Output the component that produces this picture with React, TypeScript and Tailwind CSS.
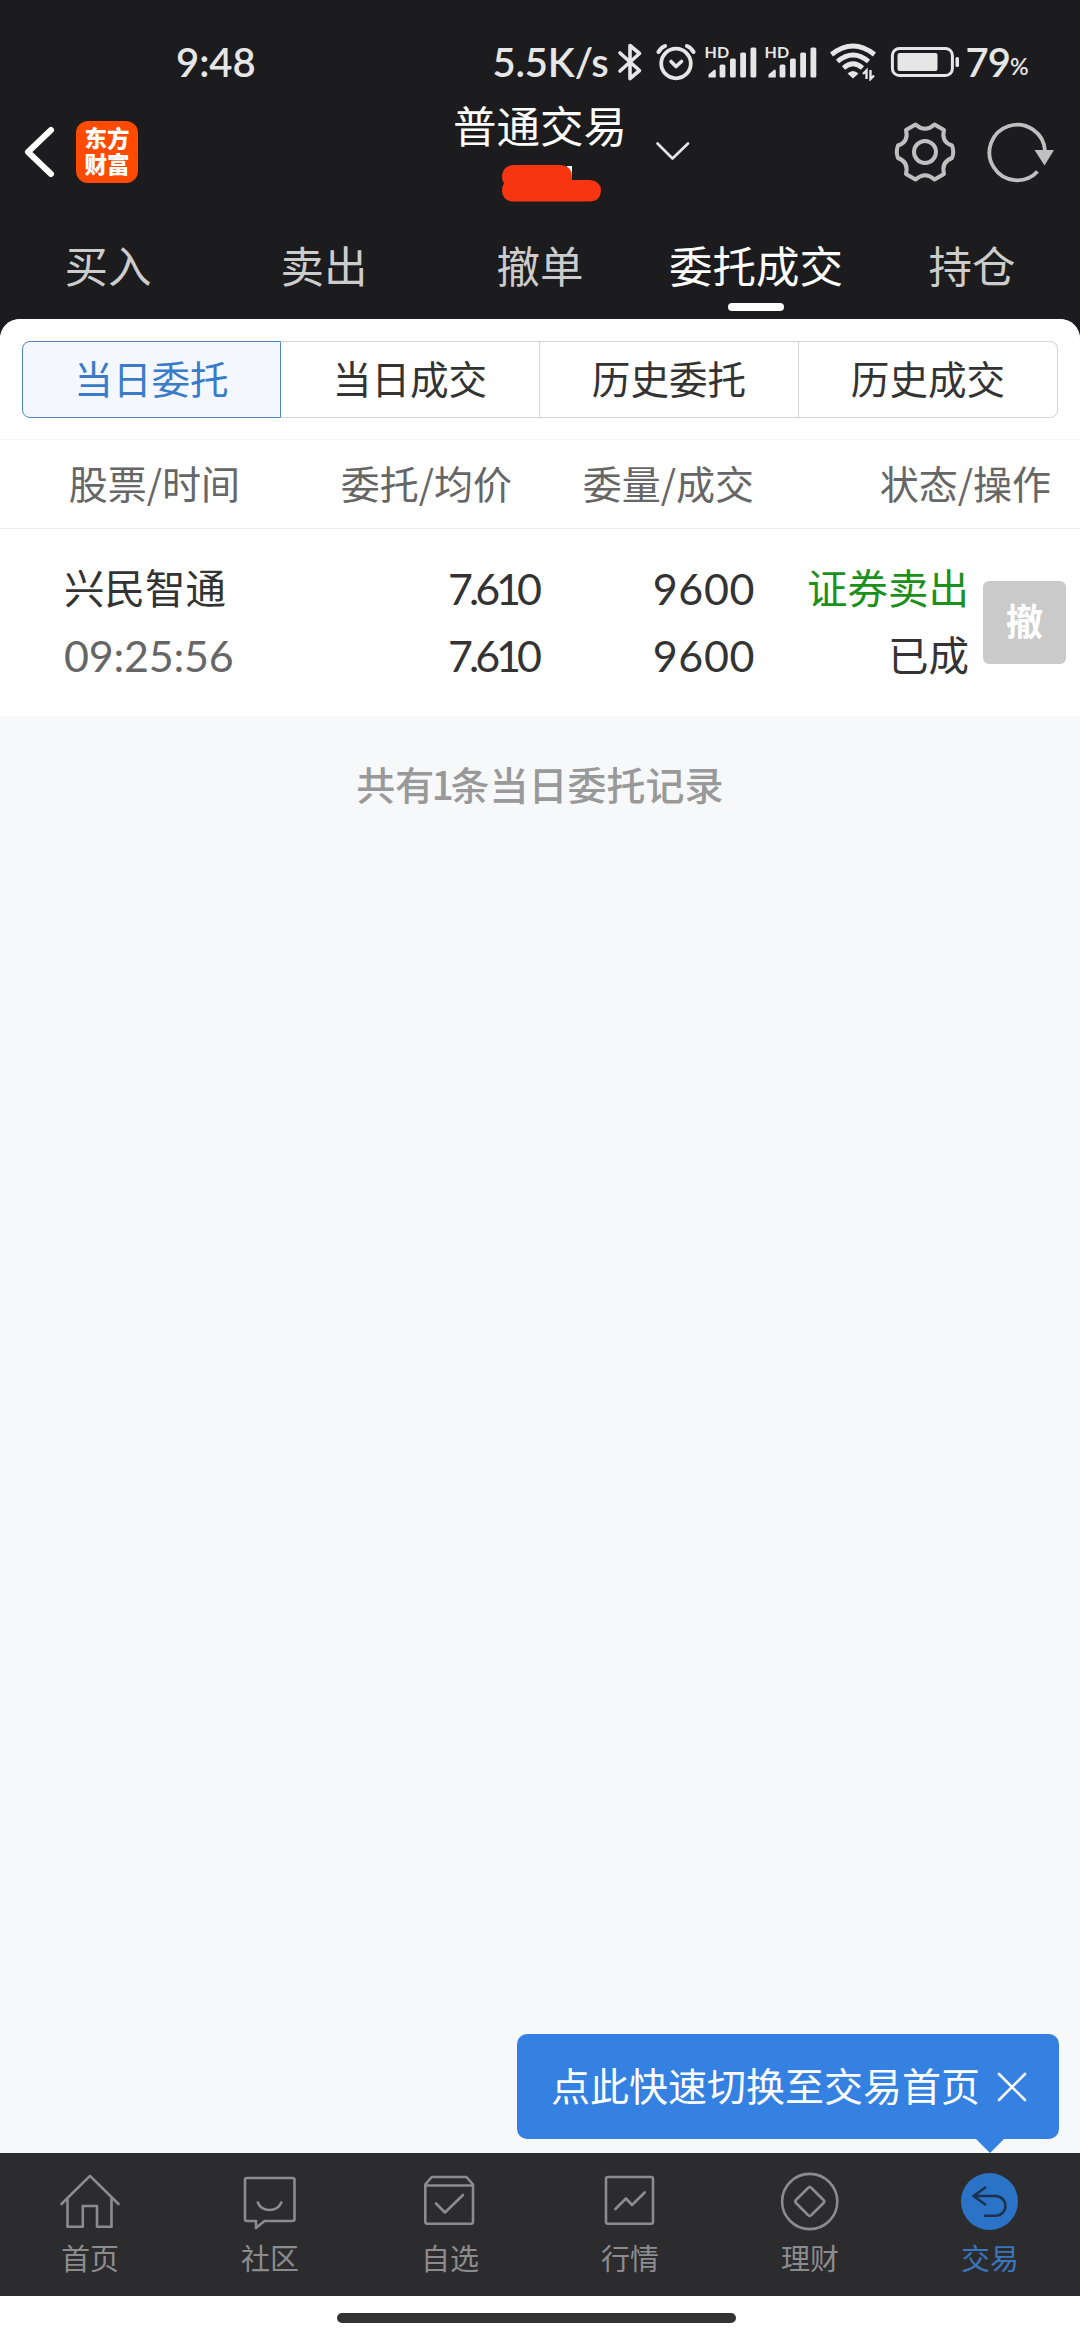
import React from "react";

const tabs = ["买入", "卖出", "撤单", "委托成交", "持仓"];
const segments = ["当日委托", "当日成交", "历史委托", "历史成交"];

function Bluetooth() {
  return (
    <svg width="26" height="40" viewBox="0 0 26 40" fill="none" stroke="#e6e6e6" strokeWidth="3.6" strokeLinejoin="round" strokeLinecap="round">
      <path d="M3 11 L22.5 28.5 L13 36.5 V3.5 L22.5 11.5 L3 29" />
    </svg>
  );
}

function Alarm() {
  return (
    <svg width="40" height="38" viewBox="0 0 40 38" fill="none" stroke="#e6e6e6" strokeLinecap="round" strokeLinejoin="round">
      <circle cx="20" cy="20.5" r="14.8" strokeWidth="3.8" />
      <path d="M2.5 9 Q5 4.5 9 3 M37.5 9 Q35 4.5 31 3" strokeWidth="4" />
      <path d="M15 18.5 L20 23.5 L25.5 18.5" strokeWidth="3.6" />
    </svg>
  );
}

function Signal() {
  return (
    <div className="relative w-[52px] h-[34px]">
      <svg width="52" height="34" viewBox="0 0 52 34" fill="#e6e6e6">
        <path d="M2.500 32.500 V29.500 L8.500 24.500 Q9.800 24.500 9.800 26 V32.500 Z" />
        <rect x="13.600" y="19.500" width="5.800" height="13" rx="1.500" />
        <rect x="24" y="13.500" width="5.800" height="19" rx="1.500" />
        <rect x="34.200" y="7.500" width="5.800" height="25" rx="1.500" />
        <rect x="44.500" y="2.500" width="5.800" height="30" rx="1.500" />
      </svg>
      <span className="absolute -left-px top-[-3px] text-[16px] leading-[20px] font-bold">HD</span>
    </div>
  );
}

function Wifi() {
  return (
    <svg width="48" height="38" viewBox="0 0 48 38" fill="none" stroke="#e6e6e6">
      <path d="M2.500 11.500 Q24 -5.500 45.500 11.500" strokeWidth="4.800" />
      <path d="M8.500 18.500 Q24 5.500 39.500 18.500" strokeWidth="4.800" />
      <path d="M14.500 25 Q24 16.500 33.500 25" strokeWidth="4.800" />
      <path d="M24 35.500 L18.500 30.500 Q24 25.500 29.500 30.500 Z" fill="#e6e6e6" stroke="none" />
      <path d="M37.500 36 V27.500 L34 31 M41.500 27 V36 L45 32.500" strokeWidth="2.400" />
    </svg>
  );
}

function Battery() {
  return (
    <svg width="70" height="32" viewBox="0 0 70 32" fill="none">
      <rect x="2.400" y="2.500" width="60" height="27" rx="7" stroke="#e6e6e6" strokeWidth="3" />
      <rect x="7.500" y="7" width="40" height="18" rx="2" fill="#e6e6e6" />
      <rect x="65.500" y="11" width="3.500" height="10" rx="1.500" fill="#e6e6e6" />
    </svg>
  );
}

function StatusBar() {
  return (
    <div className="h-[94px] flex items-center justify-between pt-[30px] font-[Lato] font-semibold text-[#e6e6e6]">
      <span className="ml-[176px] text-[40px] leading-[64px]">9:48</span>
      <div className="flex items-center mr-[51px]">
        <span className="w-[124px] text-[40px] leading-[64px] tracking-[-0.2px] whitespace-nowrap">5.5K/s</span>
        <Bluetooth />
        <div className="ml-[13px]"><Alarm /></div>
        <div className="ml-[10px]"><Signal /></div>
        <div className="ml-[8px]"><Signal /></div>
        <div className="ml-[11px]"><Wifi /></div>
        <div className="ml-[13px]"><Battery /></div>
        <span className="ml-[6px] text-[40px] leading-[64px] tracking-[-1px]">79</span>
        <span className="w-[19px] text-[23px] leading-[64px] pt-[8px]">%</span>
      </div>
    </div>
  );
}

function Header() {
  return (
    <header className="h-[126px] flex items-start justify-between">
      <div className="flex items-center w-[360px] pt-[27px] pl-[22px]">
        <svg width="36" height="62" viewBox="0 0 36 62" fill="none" stroke="#fff" strokeWidth="6" strokeLinecap="round" strokeLinejoin="round">
          <path d="M29 9 L6 31 L29 53" />
        </svg>
        <div className="ml-[18px] size-[62px] rounded-[12px] bg-[#ff4a00] text-white text-[22.500px] leading-[26px] font-black text-center pt-[3px]">
          东方
          <br />
          财富
        </div>
      </div>
      <div className="relative flex flex-col items-center w-[360px]">
        <h1 className="text-[43.500px] leading-[62px] text-white">普通交易</h1>
        <svg className="mt-[8px] ml-[22px]" width="100" height="40" viewBox="0 0 100 40">
          <path d="M66 2 H71 V16 H66 Z" fill="#fff" />
          <path d="M12 1 H60 Q71 2 71 13 V16 H89 Q100 17 100 27 Q99 37.500 89 37.500 H12 Q2 37 1 27 Q1 22 3 19.500 Q1 17 1 12 Q2 2 12 1 Z" fill="#f73511" />
        </svg>
        <svg className="absolute left-[294px] top-[45px]" width="38" height="24" viewBox="0 0 38 24" fill="none" stroke="#e8e8e8" strokeWidth="2.600" strokeLinecap="round" strokeLinejoin="round">
          <path d="M3.500 4.500 L18.500 19.500 L34 4.500" />
        </svg>
      </div>
      <div className="flex items-center justify-end w-[360px] pt-[25px] pr-[25px] gap-[28px]">
        <svg width="64" height="64" viewBox="0 0 64 64" fill="none" stroke="#bfbfbf" strokeWidth="4" strokeLinejoin="round">
          <circle cx="32" cy="32" r="11" />
          <path d="M22.500 4.500 Q32 13 41.500 4.500 L51 10 Q48 22 59 25.500 Q61.500 32 59 38 Q48 42 51 54 L41.500 59.500 Q32 51 22.500 59.500 L13 54 Q16 42 5 38 Q2.500 32 5 25.500 Q16 22 13 10 Z" />
        </svg>
        <svg width="70" height="66" viewBox="0 0 70 66" fill="none">
          <path d="M52.500 52.500 A27.800 27.800 0 1 1 60 32" stroke="#bfbfbf" strokeWidth="3.800" />
          <path d="M49.500 31 H69 L59.500 46.500 Z" fill="#bfbfbf" />
        </svg>
      </div>
    </header>
  );
}

function Tabs() {
  return (
    <nav className="grid grid-cols-5 h-[99px] pt-[13px]">
      {tabs.map((tab) => (
        <button key={tab} className={tab === "委托成交" ? "flex flex-col items-center text-white" : "flex flex-col items-center text-[#cccccc]"}>
          <span className="text-[43.500px] leading-[64px] whitespace-nowrap">{tab}</span>
          {tab === "委托成交" && <span className="mt-[6px] w-[56px] h-[8px] rounded-full bg-white" />}
        </button>
      ))}
    </nav>
  );
}

function Segments() {
  return (
    <div className="h-[120px] px-[22px] pt-[22px]">
      <div className="grid grid-cols-4 h-[77px] text-[38.600px] leading-[60px]">
        {segments.map((item, i) => (
          <button
            key={item}
            className={
              i === 0
                ? "pb-[5px] border border-[#4f86bd] bg-[#f4f8fe] text-[#3a7cc9] rounded-l-[8px]"
                : i === 3
                  ? "pb-[5px] border border-l-0 border-[#d3d4d6] text-[#333333] rounded-r-[8px]"
                  : "pb-[5px] border border-l-0 border-[#d3d4d6] text-[#333333]"
            }
          >
            {item}
          </button>
        ))}
      </div>
    </div>
  );
}

function OrderTable() {
  return (
    <section>
      <div className="flex h-[90px] border-y border-t-[#f5f5f6] border-b-[#ebebeb] text-[39px] leading-[84px] text-[#666666] whitespace-nowrap">
        <span className="w-[240px] text-right">股票/时间</span>
        <span className="w-[272px] text-right">委托/均价</span>
        <span className="w-[242px] text-right">委量/成交</span>
        <span className="w-[297px] text-right">状态/操作</span>
      </div>
      <div className="flex h-[187px] pt-[24px] text-[#333333] text-[40.500px] leading-[67px] whitespace-nowrap">
        <div className="w-[240px] pl-[64px]">
          <div>兴民智通</div>
          <div className="pt-[2px] font-[Lato] text-[43px] text-[#666666] tracking-[-0.2px]">09:25:56</div>
        </div>
        <div className="w-[298px] pt-[2px] text-right font-[Lato] text-[43px] tracking-[-4px]">
          <div>7.610</div>
          <div>7.610</div>
        </div>
        <div className="w-[217px] pt-[2px] text-right font-[Lato] text-[43px] tracking-[0.600px]">
          <div>9600</div>
          <div>9600</div>
        </div>
        <div className="w-[214px] text-right">
          <div className="text-[#1b911b]">证券卖出</div>
          <div>已成</div>
        </div>
        <button className="ml-[14px] mt-[28px] w-[83px] h-[83px] pb-[5px] rounded-[6px] bg-[#cacaca] text-white text-[37px] leading-[60px] font-bold">撤</button>
      </div>
    </section>
  );
}

function Tooltip() {
  return (
    <div className="absolute left-[517px] bottom-[187px] w-[542px] h-[119px]">
      <div className="flex items-center h-[105px] rounded-[10px] bg-[#3481e1] pl-[34px] text-[39px] leading-[60px] text-white whitespace-nowrap">
        <span className="pb-[5px]">点此快速切换至交易首页</span>
        <svg className="ml-[16px]" width="32" height="32" viewBox="0 0 32 32" fill="none" stroke="#fff" strokeWidth="2.600" strokeLinecap="round">
          <path d="M3 3 L29 29 M29 3 L3 29" />
        </svg>
      </div>
      <svg className="ml-[459px]" width="28" height="14" viewBox="0 0 28 14" fill="#3481e1">
        <path d="M0 0 H28 L14 14 Z" />
      </svg>
    </div>
  );
}

const navItems = [
  {
    label: "首页",
    icon: (
      <path d="M3.500 33 L32 4.800 L60.500 33 M9.500 28 V55.700 H24.800 V35 H39 V55.700 H53.500 V28" />
    ),
  },
  {
    label: "社区",
    icon: (
      <>
        <path d="M9 7 H54.500 Q56.500 7 56.500 9 V48 Q56.500 50 54.500 50 H26.500 L18 57 V50 H9 Q7 50 7 48 V9 Q7 7 9 7 Z" />
        <path d="M19.800 31.500 C24 41.500 39 41.500 43.300 31.500" />
      </>
    ),
  },
  {
    label: "自选",
    icon: (
      <>
        <path d="M7.300 13.500 L13.800 6 H48.500 L55 13.500 V50.500 Q55 52.700 53 52.700 H9.300 Q7.300 52.700 7.300 50.500 Z M7.300 14.500 H55" />
        <path d="M18 32.500 L27 41.500 L45 24" />
      </>
    ),
  },
  {
    label: "行情",
    icon: (
      <>
        <rect x="8" y="6" width="47" height="46.700" rx="2" />
        <path d="M17.400 38 L28 27.500 L34 34 L46.700 21.500" />
      </>
    ),
  },
  {
    label: "理财",
    icon: (
      <>
        <circle cx="31.700" cy="30.500" r="27.600" />
        <path d="M30 17 Q31.700 15 33.400 17 L45.500 29 Q47 30.500 45.500 32 L33.400 44 Q31.700 46 30 44 L18 32 Q16.500 30.500 18 29 Z" />
      </>
    ),
  },
  {
    label: "交易",
    icon: (
      <>
        <circle cx="31.500" cy="30.500" r="28.500" fill="#2b73c7" stroke="none" />
        <path d="M27.300 16.500 L15.500 25 L27.300 33.500 M15.500 25 H37 C51 25 51 44.800 37 44.800 H27" stroke="#1d304d" />
      </>
    ),
  },
];

function BottomNav() {
  return (
    <footer className="bg-white h-[187px]">
      <nav className="grid grid-cols-6 h-[143px] pt-[18px] bg-[#2c2c2e]">
        {navItems.map((item) => (
          <button key={item.label} className={item.label === "交易" ? "flex flex-col items-center text-[#3a76bd]" : "flex flex-col items-center text-[#8c8c8e]"}>
            <svg width="64" height="60" viewBox="0 0 64 60" fill="none" stroke="#8c8c8e" strokeWidth="2.600" strokeLinejoin="round" strokeLinecap="round">
              {item.icon}
            </svg>
            <span className="mt-[6px] text-[29px] leading-[40px]">{item.label}</span>
          </button>
        ))}
      </nav>
      <div className="ml-[337px] mt-[17px] w-[399px] h-[10px] rounded-full bg-[#333333]" />
    </footer>
  );
}

export default function App() {
  return (
    <div className="relative flex flex-col w-[1080px] h-[2340px] overflow-hidden bg-[#1c1c1e] font-['Noto_Sans_CJK_SC',sans-serif]">
      <StatusBar />
      <Header />
      <Tabs />
      <main className="flex-1 rounded-t-[20px] overflow-hidden bg-[#f7f8fa]">
        <div className="bg-white">
          <Segments />
          <OrderTable />
        </div>
        <p className="pt-[38px] text-center text-[39px] leading-[58px] font-medium text-[#999999]">
          共有<span className="-mx-[3px]">1</span>条当日委托记录
        </p>
      </main>
      <BottomNav />
      <Tooltip />
    </div>
  );
}
